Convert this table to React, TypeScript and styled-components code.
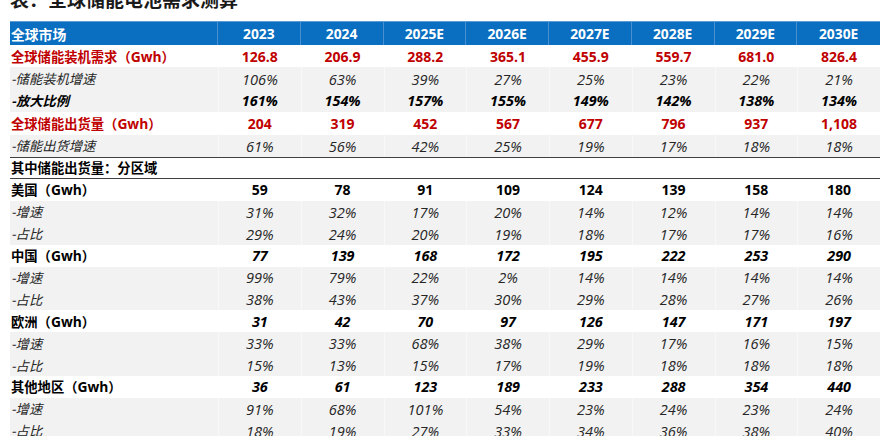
import React from "react";
import styled, { createGlobalStyle, css } from "styled-components";

const GlobalStyle = createGlobalStyle`
  html, body { margin: 0; padding: 0; background: #ffffff; }
  body {
    font-family: "Open Sans", "Noto Sans CJK SC", "Noto Sans", sans-serif;
    -webkit-font-smoothing: antialiased;
  }
`;

const Page = styled.div`
  width: 888px;
  height: 436px;
  overflow: hidden;
  box-sizing: border-box;
  padding: 0 8px 0 10px;
`;

const Title = styled.h1`
  margin: -11px 0 12px 0;
  height: 20px;
  line-height: 20px;
  font-size: 19px;
  font-weight: 700;
  color: #1a1a1a;
  font-family: "Noto Sans CJK SC", sans-serif;
  white-space: nowrap;
`;

const Table = styled.div`
  width: 870px;
  display: flex;
  flex-direction: column;
`;

const grid = css`
  display: grid;
  grid-template-columns: 208px repeat(8, 1fr);
  align-items: stretch;
`;

const HeaderRow = styled.div`
  ${grid};
  height: 24px;
  box-sizing: border-box;
  background: #0a6fc1;
  border-top: 1px solid #5d9bd6;
  color: #ffffff;
  font-weight: 700;
  font-size: 13.8px;
`;

const HeaderCell = styled.div<{ $first?: boolean }>`
  display: flex;
  align-items: center;
  justify-content: ${(p) => (p.$first ? "flex-start" : "center")};
  padding-left: ${(p) => (p.$first ? "1px" : "0")};
  border-right: 1px solid #4a8fd0;
  &:last-child { border-right: none; }
  font-family: ${(p) =>
    p.$first ? `"Noto Sans CJK SC", sans-serif` : `"Open Sans", "Noto Sans CJK SC", sans-serif`};
`;

type RowKind = "main" | "sub" | "section";

const Row = styled.div<{ $kind: RowKind; $region?: boolean; $rule?: boolean }>`
  ${grid};
  box-sizing: content-box;
  height: ${(p) => (p.$kind === "section" ? "20px" : p.$region ? "21.9px" : "22.4px")};
  background: ${(p) => (p.$kind === "sub" ? "#f2f2f2" : "#ffffff")};
  border-bottom: ${(p) => (p.$rule ? "1px solid #404040" : "none")};
`;

type Tone = "red" | "bold" | "boldItalic" | "italic";

const toneCss = (t: Tone) => {
  switch (t) {
    case "red":
      return css`color: #c00000; font-weight: 700; font-style: normal; font-size: 14px;`;
    case "bold":
      return css`color: #000000; font-weight: 700; font-style: normal; font-size: 14px;`;
    case "boldItalic":
      return css`color: #000000; font-weight: 700; font-style: italic; font-size: 14.4px;`;
    default:
      return css`color: #262626; font-weight: 400; font-style: italic; font-size: 14.6px;`;
  }
};

const Label = styled.div<{ $tone: Tone }>`
  display: flex;
  align-items: center;
  padding-left: 1px;
  white-space: nowrap;
  font-family: "Noto Sans CJK SC", sans-serif;
  ${(p) => toneCss(p.$tone)};
  font-size: 13.3px;
`;

const Gwh = styled.span`
  font-family: "Open Sans", sans-serif;
  font-size: 13.8px;
`;

const Value = styled.div<{ $tone: Tone; $shaded?: boolean }>`
  display: flex;
  align-items: center;
  justify-content: center;
  white-space: nowrap;
  border-left: 1px solid ${(p) => (p.$shaded ? "#f8f8f8" : "transparent")};
  ${(p) => toneCss(p.$tone)};
`;

type RowData = {
  label: string;
  unit?: boolean;
  kind: RowKind;
  labelTone: Tone;
  valueTone: Tone;
  values: string[];
  region?: boolean;
  rule?: boolean;
};

const years = ["2023", "2024", "2025E", "2026E", "2027E", "2028E", "2029E", "2030E"];

const rows: RowData[] = [
  { label: "全球储能装机需求", unit: true, kind: "main", labelTone: "red", valueTone: "red",
    values: ["126.8", "206.9", "288.2", "365.1", "455.9", "559.7", "681.0", "826.4"] },
  { label: "-储能装机增速", kind: "sub", labelTone: "italic", valueTone: "italic",
    values: ["106%", "63%", "39%", "27%", "25%", "23%", "22%", "21%"] },
  { label: "-放大比例", kind: "sub", labelTone: "boldItalic", valueTone: "boldItalic",
    values: ["161%", "154%", "157%", "155%", "149%", "142%", "138%", "134%"] },
  { label: "全球储能出货量", unit: true, kind: "main", labelTone: "red", valueTone: "red",
    values: ["204", "319", "452", "567", "677", "796", "937", "1,108"] },
  { label: "-储能出货增速", kind: "sub", labelTone: "italic", valueTone: "italic", rule: true,
    values: ["61%", "56%", "42%", "25%", "19%", "17%", "18%", "18%"] },
  { label: "其中储能出货量：分区域", kind: "section", labelTone: "bold", valueTone: "bold", rule: true,
    values: [] },
  { label: "美国", unit: true, kind: "main", labelTone: "bold", valueTone: "bold", region: true,
    values: ["59", "78", "91", "109", "124", "139", "158", "180"] },
  { label: "-增速", kind: "sub", labelTone: "italic", valueTone: "italic", region: true,
    values: ["31%", "32%", "17%", "20%", "14%", "12%", "14%", "14%"] },
  { label: "-占比", kind: "sub", labelTone: "italic", valueTone: "italic", region: true,
    values: ["29%", "24%", "20%", "19%", "18%", "17%", "17%", "16%"] },
  { label: "中国", unit: true, kind: "main", labelTone: "bold", valueTone: "boldItalic", region: true,
    values: ["77", "139", "168", "172", "195", "222", "253", "290"] },
  { label: "-增速", kind: "sub", labelTone: "italic", valueTone: "italic", region: true,
    values: ["99%", "79%", "22%", "2%", "14%", "14%", "14%", "14%"] },
  { label: "-占比", kind: "sub", labelTone: "italic", valueTone: "italic", region: true,
    values: ["38%", "43%", "37%", "30%", "29%", "28%", "27%", "26%"] },
  { label: "欧洲", unit: true, kind: "main", labelTone: "bold", valueTone: "boldItalic", region: true,
    values: ["31", "42", "70", "97", "126", "147", "171", "197"] },
  { label: "-增速", kind: "sub", labelTone: "italic", valueTone: "italic", region: true,
    values: ["33%", "33%", "68%", "38%", "29%", "17%", "16%", "15%"] },
  { label: "-占比", kind: "sub", labelTone: "italic", valueTone: "italic", region: true,
    values: ["15%", "13%", "15%", "17%", "19%", "18%", "18%", "18%"] },
  { label: "其他地区", unit: true, kind: "main", labelTone: "bold", valueTone: "boldItalic", region: true,
    values: ["36", "61", "123", "189", "233", "288", "354", "440"] },
  { label: "-增速", kind: "sub", labelTone: "italic", valueTone: "italic", region: true,
    values: ["91%", "68%", "101%", "54%", "23%", "24%", "23%", "24%"] },
  { label: "-占比", kind: "sub", labelTone: "italic", valueTone: "italic", region: true,
    values: ["18%", "19%", "27%", "33%", "34%", "36%", "38%", "40%"] },
];

export default function App() {
  return (
    <>
      <GlobalStyle />
      <Page>
        <Title>表：全球储能电池需求测算</Title>
        <Table>
          <HeaderRow>
            <HeaderCell $first>全球市场</HeaderCell>
            {years.map((y) => (
              <HeaderCell key={y}>{y}</HeaderCell>
            ))}
          </HeaderRow>
          {rows.map((r, i) => (
            <Row key={i} $kind={r.kind} $region={r.region} $rule={r.rule}>
              <Label $tone={r.labelTone}>
                {r.label}
                {r.unit && (
                  <>
                    （<Gwh>Gwh</Gwh>）
                  </>
                )}
              </Label>
              {r.values.map((v, j) => (
                <Value key={j} $tone={r.valueTone} $shaded={r.kind === "sub"}>
                  {v}
                </Value>
              ))}
            </Row>
          ))}
        </Table>
      </Page>
    </>
  );
}
